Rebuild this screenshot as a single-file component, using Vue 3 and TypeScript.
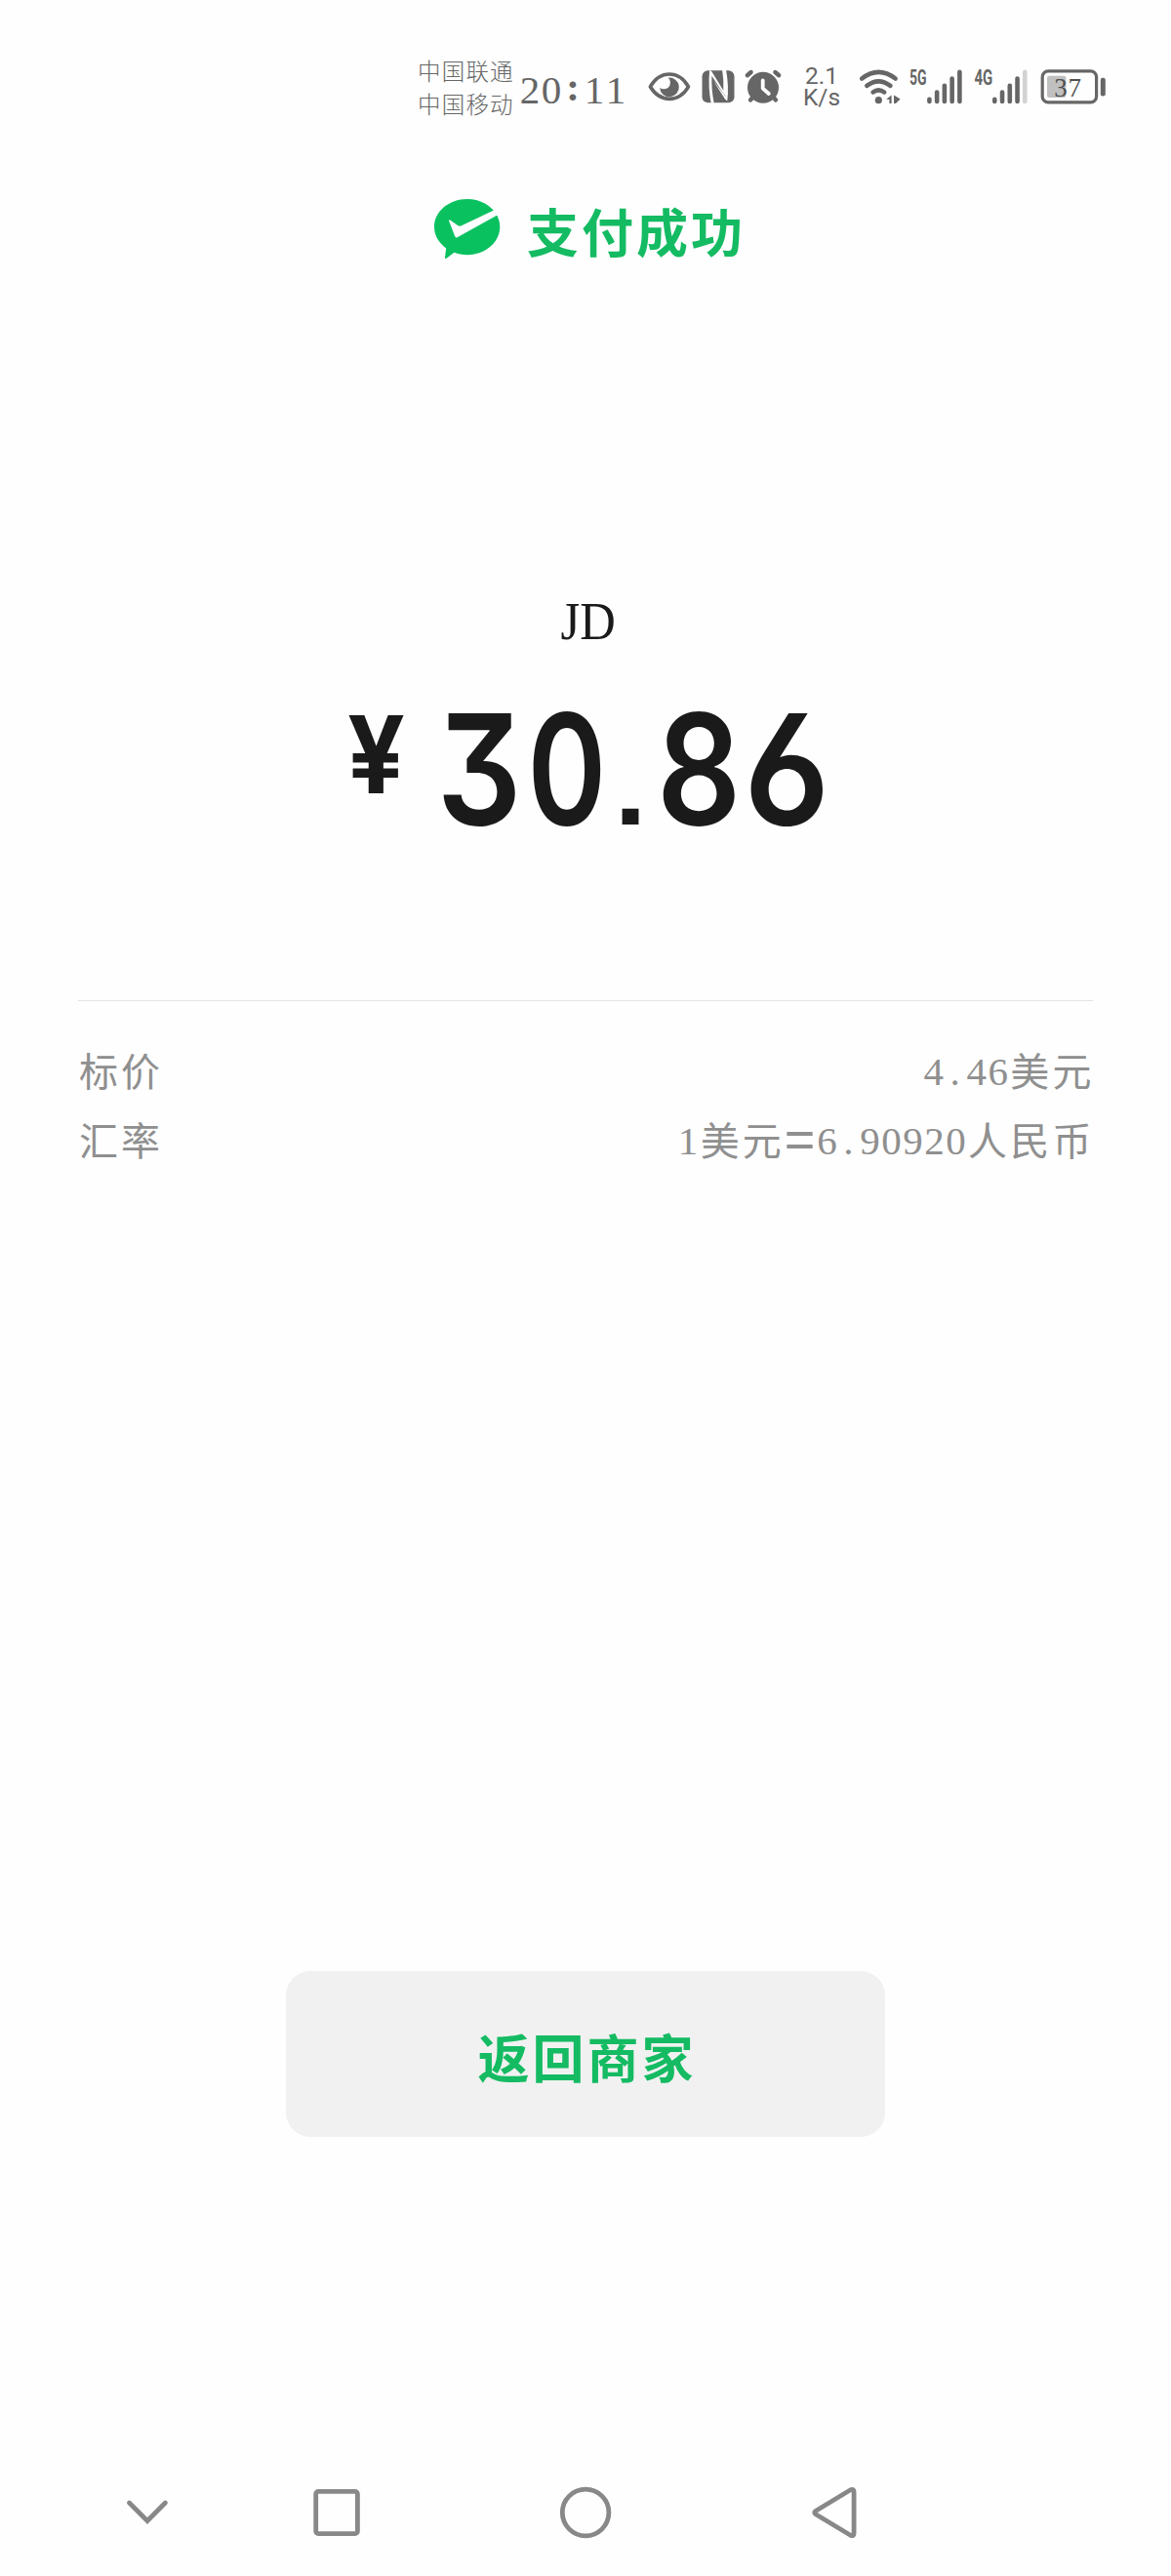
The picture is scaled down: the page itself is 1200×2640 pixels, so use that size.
<script setup lang="ts">
interface Glyph { char: string; kind: string }
interface Row { label: string; value: Glyph[] }

const amount: Glyph[] = [
  { char: '3', kind: 'three' },
  { char: '0', kind: 'zero' },
  { char: '.', kind: 'dot' },
  { char: '8', kind: 'eight' },
  { char: '6', kind: 'six' },
]

// Latin digits take half an em, Chinese characters a full one.
const split = (text: string): Glyph[] =>
  [...text].map((char) => ({
    char,
    kind: char === '=' ? 'equals' : /[\d.]/.test(char) ? 'half' : 'full',
  }))

const rows: Row[] = [
  { label: '标价', value: split('4.46美元') },
  { label: '汇率', value: split('1美元=6.90920人民币') },
]

const clock = [...'20:11']
const bars = [
  { x: 0, y: 28 },
  { x: 7.75, y: 20.7 },
  { x: 15.5, y: 14 },
  { x: 23.25, y: 6.7 },
  { x: 31, y: 0 },
]
</script>

<template>
  <div class="screen">
    <header class="status">
      <div class="carriers">
        <span>中国联通</span>
        <span>中国移动</span>
      </div>
      <div class="clock"><span v-for="(c, i) in clock" :key="i" :class="{ colon: c === ':' }">{{ c }}</span></div>

      <svg class="eye" width="44" height="32" viewBox="663.5 72.5 44 32">
        <path d="M665.8 88.3C676 71.2 695 71.2 705 88.3C695 105 676 105 665.8 88.3Z" fill="none" stroke="#666" stroke-width="3.6" stroke-linejoin="round" />
        <path d="M684.3 79.2A9.8 9.8 0 1 1 675.7 89.2Q677.5 91.2 680.6 90.8Q686.6 89.6 686.4 83.4Q686 80.8 684.3 79.2Z" fill="#666" />
      </svg>
      <svg class="nfc" width="34" height="34" viewBox="718.5 71.8 34 34">
        <rect x="719" y="72" width="33" height="33" rx="6" fill="#666" />
        <g fill="#fefefe">
          <path d="M726.6 71.5L728.8 73L740.8 92.6Q741.4 82 739.6 71.5H742.4Q745.6 83 743.4 98.4L740.6 95.4L728.9 77.6Q728.4 92 731.2 105.5H728.2Q725 90 726.6 71.5Z" />
          <path d="M730.4 82.4L742.6 101.6L744.8 103.4Q746.6 88 743.6 71.5H741.8Q744.4 86 743.2 98.6L742 97.2Z" />
        </g>
      </svg>
      <svg class="alarm" width="38" height="36" viewBox="763 71 38 36">
        <g stroke="#666" stroke-width="4.4" stroke-linecap="round">
          <path d="M765.8 77.2L769.6 74M798.2 77.2L794.4 74M769 102.4L773 98M795 102.4L791 98" />
        </g>
        <circle cx="782" cy="89.7" r="16" fill="#666" />
        <path d="M781.7 82.3V90.6L787.8 96" fill="none" stroke="#fefefe" stroke-width="3.8" stroke-linecap="round" stroke-linejoin="round" />
      </svg>
      <div class="speed"><span>2.1</span><span>K/s</span></div>
      <svg class="wifi" width="44" height="36" viewBox="880 70.5 44 36">
        <g fill="none" stroke="#666" stroke-width="4.6" stroke-linecap="round">
          <path d="M883.2 80Q900.3 66.8 917.6 80" />
          <path d="M888.3 87.4Q900.3 78.2 912.4 87.4" />
          <path d="M894.6 94Q900.3 89.8 906.2 94" />
        </g>
        <circle cx="900.3" cy="102.2" r="3.6" fill="#666" />
        <path d="M908.2 101.2L913.6 97V105.5H911.4V101.6ZM916 97L922.6 101L918 105.5H916Z" fill="#666" />
      </svg>
      <svg class="signal" width="56" height="36" viewBox="931 70.5 56 36">
        <text x="931.9" y="86.4" textLength="17.6" lengthAdjust="spacingAndGlyphs">5G</text>
        <rect v-for="b in bars" :key="b.x" :x="950.1 + b.x" :y="71 + b.y" width="4.6" :height="34.7 - b.y" rx="2.3" fill="#666" />
      </svg>
      <svg class="signal second" width="56" height="36" viewBox="998 70.5 56 36">
        <text x="998.4" y="86.4" textLength="18.8" lengthAdjust="spacingAndGlyphs">4G</text>
        <rect v-for="(b, i) in bars" :key="b.x" :x="1017 + b.x" :y="71 + b.y" width="4.6" :height="34.7 - b.y" rx="2.3" :fill="i === 4 ? '#d2d2d2' : '#666'" />
      </svg>
      <svg class="battery" width="68" height="36" viewBox="1066 70.5 68 36">
        <rect x="1068.2" y="72.4" width="55.4" height="32" rx="6" fill="none" stroke="#666" stroke-width="3.2" />
        <rect x="1073" y="77.2" width="19.4" height="22.3" rx="2" fill="#c0c0c0" />
        <rect x="1127.8" y="79.3" width="5" height="18.6" rx="2.2" fill="#666" />
        <text x="1080.2 1094.6" y="98.8">37</text>
      </svg>
    </header>

    <div class="result">
      <svg width="70" height="64" viewBox="444 203 70 64">
        <path d="M478.7 204C497.3 204 512.3 216.8 512.3 232.6S497.3 261.2 478.7 261.2C473.6 261.2 469.4 260.3 465.4 258.7L457.6 264.7Q455.8 265.6 456 263.6L457.2 254.4C449.6 249 445 241.3 445 232.6C445 216.8 460.1 204 478.7 204Z" fill="#0ac160" />
        <path d="M460 226.2Q459.8 225 461.2 225.6L469.4 231.2Q470.8 232 472.4 231.4L506 215.6L511.4 219.4L468.6 243.2Q467 243.9 466.2 242.3Z" fill="#fefefe" />
      </svg>
      <h1>支付成功</h1>
    </div>

    <main class="payment">
      <p class="payee"><span>JD</span></p>
      <p class="amount">
        <span class="yen"><span>¥</span></span>
        <span v-for="g in amount" :key="g.char" class="digit" :class="g.kind"><span>{{ g.char }}</span></span>
      </p>
    </main>

    <section class="details">
      <div v-for="r in rows" :key="r.label" class="row">
        <span class="label">{{ r.label }}</span>
        <span class="value"><span v-for="(g, i) in r.value" :key="i" :class="g.kind">{{ g.char }}</span></span>
      </div>
    </section>

    <button class="back" type="button">返回商家</button>

    <nav class="nav">
      <svg width="44" height="56" viewBox="129 2547 44 56"><path d="M132.5 2565L151 2583.5L169.4 2565" stroke-linecap="round" /></svg>
      <svg width="52" height="56" viewBox="319 2547 52 56"><rect x="323.7" y="2553.4" width="42.7" height="43.2" rx="2.5" /></svg>
      <svg width="56" height="56" viewBox="571.5 2547 56 56"><circle cx="599.6" cy="2575" r="23.8" /></svg>
      <svg width="50" height="56" viewBox="830 2547 50 56"><path d="M836 2573.2L871.5 2551.8Q875.1 2550.2 875.1 2554V2596Q875.1 2599.8 871.5 2598.2L836 2576.8Q833.4 2575 836 2573.2Z" /></svg>
    </nav>
  </div>
</template>

<style>
body { background: #fefefe; }
</style>

<style scoped>
.screen {
  display: flex;
  flex-direction: column;
  width: 1200px;
  height: 2640px;
  overflow: hidden;
  background: #fefefe;
  color: #1a1a1a;
  font-family: "Liberation Serif", "Noto Sans CJK SC", serif;
}
.status {
  display: flex;
  align-items: center;
  height: 177px;
  padding-left: 428px;
  box-sizing: border-box;
  color: #666;
}
.status svg { flex: none; overflow: visible; }
.carriers {
  display: flex;
  flex-direction: column;
  width: 104px;
  font: 300 23.5px/34px "Noto Sans CJK SC", sans-serif;
  letter-spacing: 1.2px;
  white-space: nowrap;
}
.clock {
  display: flex;
  width: 110px;
  font-size: 41px;
  line-height: 48px;
  margin-top: 6px;
}
.clock span { width: 22.2px; text-align: center; }
.clock .colon { margin-top: -3px; font-weight: 700; }
.eye { margin-left: 21.5px; }
.nfc { margin-left: 11px; }
.alarm { margin-left: 10.5px; }
.speed {
  display: flex;
  flex-direction: column;
  width: 44px;
  margin-left: 19px;
  text-align: center;
  font: 400 24.5px/22px Roboto, sans-serif;
}
.wifi { margin-left: 16px; }
.signal { margin-left: 7px; }
.signal text { font: 700 21.5px Roboto, sans-serif; fill: #666; }
.second { margin-left: 11px; }
.battery { margin-left: 12px; }
.battery text { font: 27px "Liberation Serif", serif; fill: #505050; }

.result {
  display: flex;
  align-items: center;
  height: 116px;
  padding-left: 444px;
}
h1 {
  margin: 2px 0 0 26px;
  font: 700 53px/64px "Noto Sans CJK SC", sans-serif;
  letter-spacing: 3px;
  color: #14bb62;
}

.payment {
  display: flex;
  flex-direction: column;
  height: 732px;
  padding-top: 309px;
  box-sizing: border-box;
}
.payee {
  margin: 0 0 0 5px;
  text-align: center;
  font-size: 55px;
  line-height: 70px;
}
.payee span { display: inline-block; transform: scaleX(.92); }
.amount {
  display: flex;
  margin: 20px 0 0 340px;
  font: 600 157px/192px Inter, sans-serif;
  font-feature-settings: "cv09", "cv03", "ss01", "ss07";
}
.amount > span { display: flex; justify-content: center; width: 90px; }
.amount > .yen { margin-right: 16px; font-size: 110px; line-height: 134px; font-weight: 700; padding-top: 14px; box-sizing: border-box; }
.yen span { transform: scaleX(.94); }
.three span { transform: scaleX(.87); }
.zero span { transform: scaleX(.78); }
.amount > .dot { width: 45px; }
.dot span { transform: translateX(-2px) scale(.74); transform-origin: 50% 80%; }
.eight span { transform: scaleX(.86); }
.six span { transform: scaleX(.93); }

.details {
  width: 1040px;
  height: 995px;
  margin-left: 80px;
  padding-top: 35px;
  box-sizing: border-box;
  border-top: 1px solid #e3e3e3;
  color: #8f8f8f;
}
.row {
  display: flex;
  justify-content: space-between;
  height: 71px;
  line-height: 71px;
}
.label {
  padding-left: 1px;
  font: 300 40px/71px "Noto Sans CJK SC", sans-serif;
  font-weight: 400;
  letter-spacing: 3px;
}
.value { display: flex; font-size: 41px; }
.value span { display: block; text-align: center; }
.half { width: 22px; padding-top: 2px; }
.full { width: 43.2px; font: 400 40px/71px "Noto Sans CJK SC", sans-serif; }
.equals { width: 34px; font: 54px/71px "Liberation Sans", sans-serif; }

.back {
  width: 614px;
  height: 170px;
  margin-left: 293px;
  padding: 4px 0 0 3px;
  border: 0;
  border-radius: 25px;
  background: #f1f1f1;
  font: 700 53px/64px "Noto Sans CJK SC", sans-serif;
  letter-spacing: 3px;
  color: #14bb62;
}
.nav {
  display: flex;
  margin-top: 357px;
  padding-left: 129px;
}
.nav svg { fill: none; stroke: #888; stroke-width: 4.8; }
.nav svg:nth-child(2) { margin-left: 146px; }
.nav svg:nth-child(3) { margin-left: 200.5px; }
.nav svg:nth-child(4) { margin-left: 202.5px; }
</style>
